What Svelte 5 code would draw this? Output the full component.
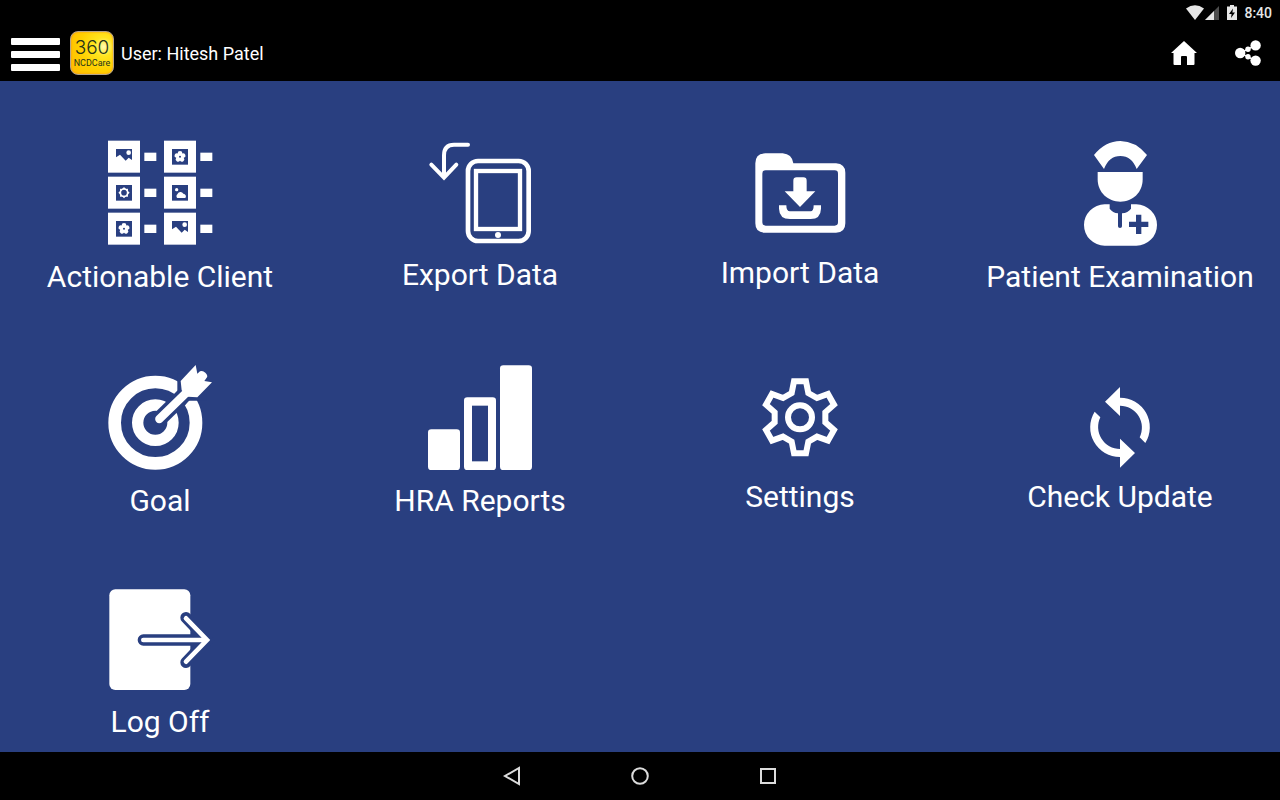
<script lang="ts">
  type Tile = { id: string; label: string; height: number };

  const tiles: Tile[] = [
    { id: "clients",  label: "Actionable Client",   height: 125 },
    { id: "export",   label: "Export Data",         height: 123 },
    { id: "import",   label: "Import Data",         height: 121 },
    { id: "patient",  label: "Patient Examination", height: 125 },
    { id: "goal",     label: "Goal",                height: 125 },
    { id: "reports",  label: "HRA Reports",         height: 125 },
    { id: "settings", label: "Settings",            height: 121 },
    { id: "update",   label: "Check Update",        height: 121 },
    { id: "logoff",   label: "Log Off",             height: 122 },
  ];

  // contact cards of the "Actionable Client" icon
  const cards = [
    { x: 54,  y: 32,  kind: "photo" },
    { x: 222, y: 32,  kind: "flower" },
    { x: 54,  y: 140, kind: "sun" },
    { x: 222, y: 140, kind: "cloud" },
    { x: 54,  y: 248, kind: "flower" },
    { x: 222, y: 248, kind: "photo" },
  ];

  const petals = [0, 72, 144, 216, 288];
  const rays = [0, 45, 90, 135, 180, 225, 270, 315];
</script>

<div class="screen">
  <header>
    <div class="status">
      <svg width="18" height="15" viewBox="0 0 18 15" aria-hidden="true">
        <path d="M0 3.5Q9-3 18 3.5L9 15Z" fill="#e6e6e6" />
      </svg>
      <svg class="signal" width="14" height="14" viewBox="0 0 14 14" aria-hidden="true">
        <path d="M14 0V14H0Z" fill="#4d4d4d" />
        <path d="M9 5V14H0Z" fill="#e6e6e6" />
      </svg>
      <svg class="battery" width="10" height="15" viewBox="0 0 10 15" aria-hidden="true">
        <path d="M3 0H7V1.5H10V15H0V1.5H3Z" fill="#e6e6e6" />
        <path d="M6 3.5L2 9H4.6L4 13 8 7.4H5.4Z" fill="#000" />
      </svg>
      <span>8:40</span>
    </div>

    <div class="bar">
      <button class="menu" aria-label="Menu">
        <i></i><i></i><i></i>
      </button>
      <div class="logo">
        <span class="logo-num">360</span>
        <span class="logo-name">NCDCare</span>
      </div>
      <span class="user">User: Hitesh Patel</span>
      <button class="action" aria-label="Home">
        <svg width="26" height="26" viewBox="0 0 26 26">
          <path d="M13 1L26 13H23.5V24Q23.5 25 22.5 25H16V17Q16 16 15 16H11Q10 16 10 17V25H3.5Q2.5 25 2.5 24V13H0Z" fill="#fff" />
        </svg>
      </button>
      <button class="action" aria-label="Share">
        <svg width="26" height="26" viewBox="0 0 26 26">
          <g fill="#fff">
            <circle cx="5.2" cy="13" r="5.2" />
            <circle cx="20.6" cy="5.4" r="5.2" />
            <circle cx="20.6" cy="20.6" r="5.2" />
            <circle cx="13" cy="9.2" r="2.7" />
            <circle cx="13" cy="16.8" r="2.7" />
          </g>
          <path d="M8 11.6L18 6.6M8 14.4L18 19.4" stroke="#fff" stroke-width="1.6" />
        </svg>
      </button>
    </div>
  </header>

  <main>
    {#each tiles as tile}
      <button class="tile">
        <svg
          width="140"
          height={tile.height}
          viewBox="0 0 420 {tile.height * 3}"
          aria-hidden="true"
        >
          {#if tile.id === "clients"}
            {#each cards as card}
              <g transform="translate({card.x} {card.y})">
                <rect width="96" height="96" class="w" />
                <rect x="109" y="36" width="36" height="25" class="w" />
                {#if card.kind === "photo"}
                  <path d="M24 25H72V58L62 51 53 60 36 42 24 50Z" class="b" />
                  <circle cx="62" cy="36" r="7" class="w" />
                {:else if card.kind === "flower"}
                  <rect x="24" y="25" width="48" height="47" class="b" />
                  {#each petals as a}
                    <circle cx="48" cy="38" r="7" class="w" transform="rotate({a} 48 48)" />
                  {/each}
                  <circle cx="48" cy="48" r="8" class="w" />
                  <circle cx="48" cy="48" r="3" class="b" />
                {:else if card.kind === "sun"}
                  <rect x="24" y="25" width="48" height="47" class="b" />
                  {#each rays as a}
                    <path d="M42 38L48 31 54 38Z" class="w" transform="rotate({a} 48 48)" />
                  {/each}
                  <circle cx="48" cy="48" r="11" class="line" stroke-width="5" />
                {:else}
                  <rect x="24" y="25" width="48" height="47" class="b" />
                  <circle cx="38" cy="39" r="5" class="w" />
                  <path d="M40 64A7 7 0 0 1 40 53 10 10 0 0 1 58 51 8 8 0 0 1 64 64Z" class="w" />
                {/if}
              </g>
            {/each}
          {:else if tile.id === "export"}
            <g class="line" stroke-width="12" stroke-linecap="round">
              <path d="M174 44H132Q102 44 102 76V140M64 104L102 143 139 104" />
              <rect x="174" y="93" width="182" height="240" rx="30" stroke-width="14" />
              <rect x="198" y="123" width="132" height="174" stroke-width="13" />
            </g>
            <circle cx="264" cy="315" r="9" class="w" />
          {:else if tile.id === "import"}
            <path
              class="w"
              fill-rule="evenodd"
              d="M76 100Q76 70 106 70H158Q186 72 190 100H318Q346 102 346 128V280Q346 308 318 308H104Q76 308 76 280ZM107 121Q97 121 97 131V277Q97 287 107 287H314Q324 287 324 277V131Q324 121 314 121Z"
            />
            <path class="w" d="M200 142H220Q230 142 230 152V184H256L210 231 164 184H190V152Q190 142 200 142Z" />
            <path class="w" d="M147 226H169Q169 244 180 244H242Q251 244 251 226H273V236Q272 267 242 267H180Q148 267 147 236Z" />
          {:else if tile.id === "patient"}
            <path class="w" d="M132 75Q166 33 211 33T291 75L260 117Q245 78 211 78T162 117Z" />
            <path class="w" d="M143 126H278V148C278 188 248 215 211 215S143 188 143 148Z" />
            <path
              class="w"
              d="M164 223H179V236Q188 248 204 250V289Q204 294 210 294T216 289V250Q234 248 243 236V223H259A62 62 0 0 1 259 347H164A62 62 0 0 1 164 223Z"
            />
            <path class="b" d="M258 254H274V275H295V291H274V312H258V291H237V275H258Z" />
          {:else if tile.id === "goal"}
            <g transform="translate(0 3)">
              <circle cx="196" cy="203" r="122" class="line" stroke-width="38" />
              <circle cx="196" cy="203" r="53" class="line" stroke-width="34" />
              <path class="cut" d="M208 192L288 114" stroke-width="46" />
              <path class="b" d="M262 55V108L254 118 284 152 296 137H350V55Z" />
              <path class="line" d="M208 192L292 110" stroke-width="25" stroke-linecap="round" />
              <path class="w" d="M272 78L317 30 322 56 330 49Q338 45 346 53T351 67L343 78 366 82 322 127 294 125 275 106Z" />
            </g>
          {:else if tile.id === "reports"}
            <g transform="translate(0 3)">
              <rect x="54" y="223" width="96" height="122" rx="10" class="w" />
              <rect x="162" y="127" width="96" height="218" rx="10" class="w" />
              <rect x="186" y="152" width="48" height="167" class="b" />
              <rect x="270" y="31" width="96" height="314" rx="10" class="w" />
            </g>
          {:else if tile.id === "settings"}
            <g transform="translate(210 190)" class="line" stroke-width="18">
              <path
                d="M-18-108L18-108 25-73 51-58 84-70 102-38 76-15 76 15 102 38 84 70 51 58 25 73 18 108-18 108-25 73-51 58-84 70-102 38-76 15-76-15-102-38-84-70-51-58-25-73Z"
              />
              <circle r="36" />
            </g>
          {:else if tile.id === "update"}
            <g transform="translate(0 3)" class="w">
              <path d="M210 96L165 140 210 183V152A66 66 0 0 1 269 247L286 264A89 89 0 0 0 210 128Z" />
              <path d="M210 338L255 294 210 251V282A66 66 0 0 1 151 187L134 170A89 89 0 0 0 210 306Z" />
            </g>
          {:else}
            <g transform="translate(0 6)" stroke-linecap="round">
              <rect x="58" y="28" width="243" height="302" rx="18" class="w" />
              <path class="cut" d="M160 180H345M288 113L352 180 288 247" stroke-width="34" />
              <path class="line" d="M160 180H345M288 115L351 180 288 245" stroke-width="14" />
            </g>
          {/if}
        </svg>
        <span>{tile.label}</span>
      </button>
    {/each}
  </main>

  <nav>
    <button aria-label="Back">
      <svg width="20" height="20" viewBox="0 0 20 20">
        <path d="M17 2V18L3 10Z" />
      </svg>
    </button>
    <button aria-label="Home screen">
      <svg width="20" height="20" viewBox="0 0 20 20">
        <circle cx="10" cy="10" r="7.8" />
      </svg>
    </button>
    <button aria-label="Recent apps">
      <svg width="20" height="20" viewBox="0 0 20 20">
        <rect x="3" y="3" width="14" height="14" />
      </svg>
    </button>
  </nav>
</div>

<style>
  :global(body) {
    background: #000;
  }

  .screen {
    --blue: #293f80;
    display: flex;
    flex-direction: column;
    min-height: 100vh;
    font-family: Roboto, "Liberation Sans", sans-serif;
    color: #fff;
  }

  button {
    padding: 0;
    border: 0;
    background: none;
    color: inherit;
    font: inherit;
    cursor: pointer;
  }

  svg {
    display: block;
  }

  header {
    background: #000;
  }

  .status {
    display: flex;
    align-items: center;
    justify-content: flex-end;
    height: 25px;
    padding-right: 8px;
    font-size: 14px;
    font-weight: 500;
    color: #e6e6e6;
  }

  .signal {
    margin-left: 1px;
  }

  .battery {
    margin: 0 7px 0 8px;
  }

  .bar {
    display: flex;
    align-items: center;
    height: 56px;
    padding: 0 19px 0 11px;
  }

  .menu {
    display: flex;
    flex-direction: column;
    gap: 6px;
    width: 49px;
    margin: 2px 10px 0 0;
  }

  .menu i {
    height: 7px;
    background: #fff;
    border-radius: 1px;
  }

  .logo {
    display: flex;
    flex-direction: column;
    align-items: center;
    justify-content: center;
    box-sizing: border-box;
    width: 44px;
    height: 44px;
    border: 1px solid #b5a58c;
    border-radius: 8px;
    background: radial-gradient(circle at 78% 35%, #fffbb0 0, #ffe51f 22%, #ffd000 55%, #ffba00 100%);
    box-shadow: inset 0 0 2px #f08a24;
    color: #26331a;
    white-space: nowrap;
  }

  .logo-num {
    font-family: Inter, sans-serif;
    font-size: 19px;
    font-weight: 300;
    line-height: 20px;
  }

  .logo-name {
    font-size: 9px;
    line-height: 10px;
  }

  .user {
    margin-left: 7px;
    margin-right: auto;
    font-size: 18px;
  }

  .action {
    margin-left: 38px;
  }

  main {
    flex: 1;
    display: grid;
    grid-template-columns: repeat(4, 1fr);
    align-content: start;
    row-gap: 59px;
    padding: 49px 0 10px;
    background: var(--blue);
  }

  .tile {
    display: flex;
    flex-direction: column;
    align-items: center;
    justify-content: flex-start;
    gap: 4px;
    font-size: 30px;
    line-height: 36px;
    white-space: nowrap;
  }

  .w {
    fill: #fff;
  }

  .b {
    fill: var(--blue);
  }

  .line {
    fill: none;
    stroke: #fff;
  }

  .cut {
    fill: none;
    stroke: var(--blue);
  }

  nav {
    display: flex;
    justify-content: center;
    height: 48px;
    background: #000;
  }

  nav button {
    display: flex;
    align-items: center;
    justify-content: center;
    width: 128px;
  }

  nav svg {
    fill: none;
    stroke: #dcdcdc;
    stroke-width: 2;
  }
</style>
